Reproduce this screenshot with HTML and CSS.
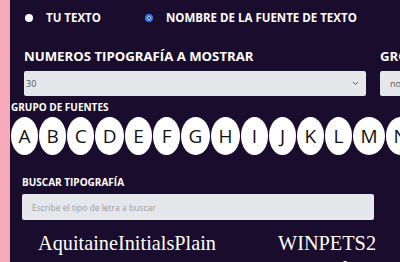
FILE: index.html
```html
<!DOCTYPE html>
<html lang="es">
<head>
<meta charset="utf-8">
<link rel="stylesheet" href="styles.css">
</head>
<body>
<div class="page">
  <aside class="strip"></aside>
  <main class="main">
    <div class="radios">
      <label class="radio"><span class="dot"></span>TU TEXTO</label>
      <label class="radio"><span class="dot checked"></span>NOMBRE DE LA FUENTE DE TEXTO</label>
    </div>
    <div class="filters">
      <div class="field field-a">
        <div class="label-lg">NUMEROS TIPOGRAFÍA A MOSTRAR</div>
        <div class="select"><span>30</span><svg class="chev" width="7" height="5" viewBox="0 0 7 5"><path d="M1 1l2.5 2.5L6 1" fill="none" stroke="#555" stroke-width="1"/></svg></div>
      </div>
      <div class="field field-b">
        <div class="label-lg">GROUP</div>
        <div class="select"><span class="pad">no</span></div>
      </div>
    </div>
    <div class="label-sm group-label">GRUPO DE FUENTES</div>
    <div class="letters">
      <span class="l">A</span><span class="l">B</span><span class="l">C</span><span class="l">D</span><span class="l">E</span><span class="l">F</span><span class="l">G</span><span class="l">H</span><span class="l">I</span><span class="l">J</span><span class="l">K</span><span class="l">L</span><span class="l">M</span><span class="l">N</span>
    </div>
    <div class="search">
      <div class="label-sm">BUSCAR TIPOGRAFÍA</div>
      <div class="input">Escribe el tipo de letra a buscar</div>
    </div>
    <div class="fonts">
      <div class="font">AquitaineInitialsPlain</div>
      <div class="font">WINPETS2</div>
      <div class="font">Bookman Old Style</div>
      <div class="font">TL Serif Italic</div>
    </div>
  </main>
</div>
</body>
</html>
```
FILE: styles.css
```css
html, body {
  margin: 0;
  padding: 0;
  background: #1a0c2d;
  overflow: hidden;
}
.page {
  display: flex;
  width: 400px;
  height: 262px;
  overflow: hidden;
}
.strip {
  flex: 0 0 10px;
  background: #f7a8b9;
}
.main {
  flex: 0 0 560px;
  font-family: "Open Sans", "Noto Sans", sans-serif;
  color: #fff;
}
.radios {
  display: flex;
  gap: 44px;
  padding: 6px 0 0 15px;
  height: 23px;
  align-items: center;
}
.radio {
  display: flex;
  align-items: center;
  gap: 13px;
  font-weight: 700;
  font-size: 11.5px;
}
.dot {
  width: 8px;
  height: 8px;
  border-radius: 50%;
  background: #fff;
  box-sizing: border-box;
}
.dot.checked {
  background: #1a0c2d;
  border: 2px solid #2f7cf6;
  box-shadow: inset 0 0 0 1px #fff;
}
.filters {
  display: flex;
  gap: 14px;
  padding: 18px 0 0 14px;
}
.field-a { width: 342px; }
.field-b { width: 120px; }
.label-lg {
  font-weight: 700;
  font-size: 13.2px;
  line-height: 19px;
  margin-bottom: 5px;
}
.select {
  height: 25px;
  background: #e5e7eb;
  border-radius: 2px;
  display: flex;
  align-items: center;
  justify-content: space-between;
  padding: 0 7px 0 2px;
  color: #555;
  font-size: 9px;
}
.select .pad { padding-left: 8px; font-size: 9px; }
.label-sm {
  font-weight: 700;
  font-size: 10px;
  line-height: 14px;
}
.group-label {
  padding: 4px 0 0 1px;
}
.letters {
  display: flex;
  gap: 1px;
  padding: 3px 0 0 1px;
}
.l {
  display: flex;
  align-items: center;
  justify-content: center;
  background: #fff;
  color: #111;
  border-radius: 50%;
  height: 38px;
  padding: 0 7.5px;
  min-width: 12px;
  font-size: 19px;
  font-family: "Open Sans", sans-serif;
  flex: 0 0 auto;
}
.search {
  padding: 20px 0 0 12px;
}
.search .label-sm { margin-bottom: 5px; }
.input {
  width: 352px;
  height: 26px;
  box-sizing: border-box;
  background: #e5e7eb;
  border-radius: 2px;
  padding: 0 10px;
  display: flex;
  align-items: center;
  font-size: 8.5px;
  color: #9a9ca2;
}
.fonts {
  display: grid;
  grid-template-columns: 240px 130px;
  padding: 10px 0 0 28px;
  row-gap: 0;
}
.font {
  font-family: "Liberation Serif", serif;
  font-size: 20.3px;
  line-height: 26px;
  color: #fff;
}
```
